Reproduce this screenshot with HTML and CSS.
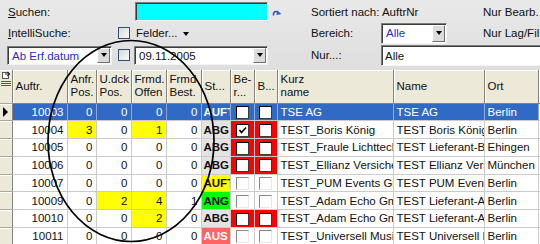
FILE: index.html
```html
<!DOCTYPE html>
<html lang="de">
<head>
<meta charset="utf-8">
<title>Aufträge</title>
<link rel="stylesheet" href="styles.css">
</head>
<body>
<div class="filter">
  <span class="lbl span2"><u>S</u>uchen:</span>
  <div class="edit search"></div>
  <span class="refresh"><svg width="11" height="8" viewBox="0 0 11 8"><path d="M1.5 6.5 C1 2.5 4 1.5 6.5 3.5" fill="none" stroke="#2a5bd0" stroke-width="1.6"/><path d="M5 1.5 L9.5 5 L4.5 6 Z" fill="#2a5bd0"/></svg></span>
  <span class="lbl span2">Sortiert nach: AuftrNr</span>
  <span class="lbl">Nur Bearb.</span>

  <span class="lbl"><u>I</u>ntelliSuche:</span>
  <i class="box"></i>
  <span class="lbl felder">Felder... <b class="tri"></b></span>
  <span class="lbl col5">Bereich:</span>
  <div class="combo bereich"><span class="val blue">Alle</span><span class="btn"><b class="tri"></b></span></div>
  <span class="lbl">Nur Lag/Fil</span>

  <div class="combo erf"><span class="val blue">Ab Erf.datum</span><span class="btn"><b class="tri"></b></span></div>
  <i class="box"></i>
  <div class="combo datum"><span class="val">09.11.2005</span><span class="btn"><b class="tri"></b></span></div>
  <span class="lbl col5">Nur...:</span>
  <div class="edit nur">Alle</div>
</div>

<table class="grid">
  <colgroup>
    <col style="width:12px"><col style="width:55px"><col style="width:29px"><col style="width:35px">
    <col style="width:35px"><col style="width:35px"><col style="width:29px"><col style="width:24px">
    <col style="width:23px"><col style="width:116px"><col style="width:91px"><col style="width:54px">
    <col style="width:40px">
  </colgroup>
  <thead>
    <tr>
      <th class="ind"><svg width="10" height="17" viewBox="0 0 10 17"><rect x="1.5" y="1.5" width="6" height="6" fill="#fff" stroke="#555"/><path d="M4 3 L8 3 M6 1 L9 3 L6 5" fill="none" stroke="#222"/><path d="M0 10.5 H10 M0 12.5 H10 M0 14.5 H10" stroke="#3b5a9a"/></svg></th>
      <th>Auftr.</th><th>Anfr.<br>Pos.</th><th>U.dck<br>Pos.</th><th>Frmd.<br>Offen</th><th>Frmd<br>Best.</th>
      <th>St...</th><th>Be-<br>r...</th><th>B...</th><th>Kurz<br>name</th><th>Name</th><th>Ort</th><th></th>
    </tr>
  </thead>
  <tbody>
    <tr class="sel">
      <td class="ind"><b class="arrow"></b></td><td class="num">10003</td><td class="num">0</td><td class="num">0</td><td class="num">0</td><td class="num">0</td>
      <td class="st">AUFT</td><td class="chk"><i class="cb"></i></td><td class="chk"><i class="cb"></i></td>
      <td>TSE AG</td><td>TSE AG</td><td>Berlin</td><td class="blank"></td>
    </tr>
    <tr>
      <td class="ind"></td><td class="num">10004</td><td class="num hl">3</td><td class="num">0</td><td class="num hl">1</td><td class="num">0</td>
      <td class="st abg">ABG</td><td class="chk red"><i class="cb"><svg width="9" height="9" viewBox="0 0 9 9"><path d="M1.5 4 L3.5 6.5 L8 1.5" fill="none" stroke="#000" stroke-width="1.6"/></svg></i></td><td class="chk red"><i class="cb"></i></td>
      <td>TEST_Boris König</td><td>TEST Boris König</td><td>Berlin</td><td></td>
    </tr>
    <tr>
      <td class="ind"></td><td class="num">10005</td><td class="num">0</td><td class="num">0</td><td class="num">0</td><td class="num">0</td>
      <td class="st abg">ABG</td><td class="chk red"><i class="cb"></i></td><td class="chk red"><i class="cb"></i></td>
      <td>TEST_Fraule Lichttechnik</td><td>TEST Lieferant-Berlin</td><td>Ehingen</td><td></td>
    </tr>
    <tr>
      <td class="ind"></td><td class="num">10006</td><td class="num">0</td><td class="num">0</td><td class="num">0</td><td class="num">0</td>
      <td class="st abg">ABG</td><td class="chk red"><i class="cb"></i></td><td class="chk red"><i class="cb"></i></td>
      <td>TEST_Ellianz Versicherung</td><td>TEST Ellianz Versicherung</td><td>München</td><td></td>
    </tr>
    <tr>
      <td class="ind"></td><td class="num">10007</td><td class="num">0</td><td class="num">0</td><td class="num">0</td><td class="num">0</td>
      <td class="st auft">AUFT</td><td class="chk"><i class="cb flat"></i></td><td class="chk"><i class="cb flat"></i></td>
      <td>TEST_PUM Events GmbH</td><td>TEST PUM Events GmbH</td><td>Berlin</td><td></td>
    </tr>
    <tr>
      <td class="ind"></td><td class="num">10009</td><td class="num">0</td><td class="num hl">2</td><td class="num hl">4</td><td class="num">1</td>
      <td class="st ang">ANG</td><td class="chk"><i class="cb flat"></i></td><td class="chk"><i class="cb flat"></i></td>
      <td>TEST_Adam Echo GmbH</td><td>TEST Lieferant-Adam</td><td>Berlin</td><td></td>
    </tr>
    <tr>
      <td class="ind"></td><td class="num">10010</td><td class="num">0</td><td class="num">0</td><td class="num hl">2</td><td class="num">0</td>
      <td class="st abg">ABG</td><td class="chk red"><i class="cb"></i></td><td class="chk red"><i class="cb"></i></td>
      <td>TEST_Adam Echo GmbH</td><td>TEST Lieferant-Adam</td><td>Berlin</td><td></td>
    </tr>
    <tr>
      <td class="ind"></td><td class="num">10011</td><td class="num">0</td><td class="num">0</td><td class="num">0</td><td class="num">0</td>
      <td class="st aus">AUS</td><td class="chk"><i class="cb flat"></i></td><td class="chk"><i class="cb flat"></i></td>
      <td>TEST_Universell Musik</td><td>TEST Universell Musik</td><td>Berlin</td><td></td>
    </tr>
  </tbody>
</table>

<svg class="circle" width="540" height="244" viewBox="0 0 540 244">
  <ellipse cx="131" cy="141" rx="83" ry="100.5" fill="none" stroke="#000" stroke-width="1.7"/>
</svg>
</body>
</html>
```

FILE: styles.css
```css
* { margin:0; padding:0; box-sizing:border-box; }
body {
  width:540px;
  height:244px;
  overflow:hidden;
  position:relative;
  background:#e2e2e2;
  font:11.5px "Liberation Sans", Arial, sans-serif;
  color:#111;
}

/* Filterbereich oben */
.filter {
  display:grid;
  grid-template-columns:110px 17px 133px 43px 70px 102px 1fr;
  grid-template-rows:21px 22px 22px;
  align-items:center;
  height:70px;
  padding:1px 0 4px 8px;
  white-space:nowrap;
  background:linear-gradient(#e9e9e9, #dedede);
}
.lbl { line-height:14px; }
.span2 { grid-column:span 2; }
.col5 { grid-column:5; }
.felder { padding-left:1px; }
.felder .tri { margin-left:2px; vertical-align:middle; }

.edit {
  height:19px;
  border:1px solid;
  border-color:#7d7d7d #f4f4f4 #f4f4f4 #7d7d7d;
  box-shadow:inset 1px 1px #3c3c3c;
  background:#fff;
  padding:2px 3px;
  line-height:14px;
}
.search { background:#00ffff; width:133px; }
.nur { grid-column:6 / span 2; height:21px; padding-top:3px; margin-right:-10px; }

.refresh { padding-left:4px; padding-top:2px; }

.box {
  display:block;
  width:12px;
  height:12px;
  border:1px solid #2f4f78;
  background:linear-gradient(135deg, #d8d8d2, #fbfbfb);
}

.combo {
  display:flex;
  align-items:stretch;
  border:1px solid;
  border-color:#7d7d7d #f4f4f4 #f4f4f4 #7d7d7d;
  box-shadow:inset 1px 1px #3c3c3c;
  background:#fff;
  padding:1px 1px 1px 1px;
}
.combo .val { flex:1; padding:1px 3px 0; line-height:15px; }
.blue { color:#2b2bc6; }
.combo .btn {
  width:13px;
  display:flex;
  align-items:center;
  justify-content:center;
  background:#dcdcdc;
  border:1px solid;
  border-color:#fff #6f6f6f #6f6f6f #fff;
}
.tri {
  display:inline-block;
  width:0;
  height:0;
  border-left:3.5px solid transparent;
  border-right:3.5px solid transparent;
  border-top:4px solid #000;
}
.erf { height:19px; width:105px; margin-left:-1px; }
.datum { height:19px; width:134px; margin-left:-1px; }
.bereich { height:21px; width:66px; }

/* Datengitter */
.grid {
  border-collapse:collapse;
  table-layout:fixed;
  width:578px;
}
.grid th, .grid td {
  overflow:hidden;
  white-space:nowrap;
  padding:0 3px;
}
.grid th {
  height:33px;
  background:#ece9d8;
  font-weight:normal;
  text-align:left;
  line-height:13.5px;
  border-right:1px solid #85837a;
  border-bottom:1px solid #85837a;
  box-shadow:inset 1px 1px #fff;
}
.grid tbody tr { height:17.75px; }
.grid td {
  background:#fff;
  border-right:1px solid #cbcbcb;
  border-bottom:1px solid #cbcbcb;
  line-height:14px;
}
.grid .ind {
  padding:0;
  background:#ece9d8;
  border-right:1px solid #85837a;
  border-bottom:1px solid #aca899;
  box-shadow:inset 0 1px #fff;
  vertical-align:middle;
}
.grid th.ind { vertical-align:top; padding:1px 0 0 1px; }
.arrow {
  display:block;
  margin-left:3px;
  width:0;
  height:0;
  border-top:5px solid transparent;
  border-bottom:5px solid transparent;
  border-left:5px solid #000;
}
.num { text-align:right; }
.hl { background:#ffff00 !important; }

.st { font-weight:bold; padding:0 2px !important; }
.abg { background:#e3e3e3 !important; }
.auft { background:#ffff00 !important; }
.ang { background:#00ff00 !important; }
.aus { background:#ff6464 !important; color:#fff; }

.chk { text-align:center; padding:0 !important; }
.red { background:#ff0000 !important; }
.cb {
  display:inline-flex;
  align-items:center;
  justify-content:center;
  width:13px;
  height:13px;
  vertical-align:middle;
  background:#fff;
  border:1px solid;
  border-color:#000 #3a3a3a #3a3a3a #000;
}
.cb.flat { border-color:#8a8a8a #e8e8e8 #e8e8e8 #8a8a8a; background:#fdfdfd; }

.sel td { background:#316ac5; color:#fff; border-right-color:#8fa9d8; }
.sel td.ind { background:#ece9d8; }
.sel td.blank { background:#fff; }

.circle {
  position:absolute;
  left:0;
  top:0;
  pointer-events:none;
}
```
